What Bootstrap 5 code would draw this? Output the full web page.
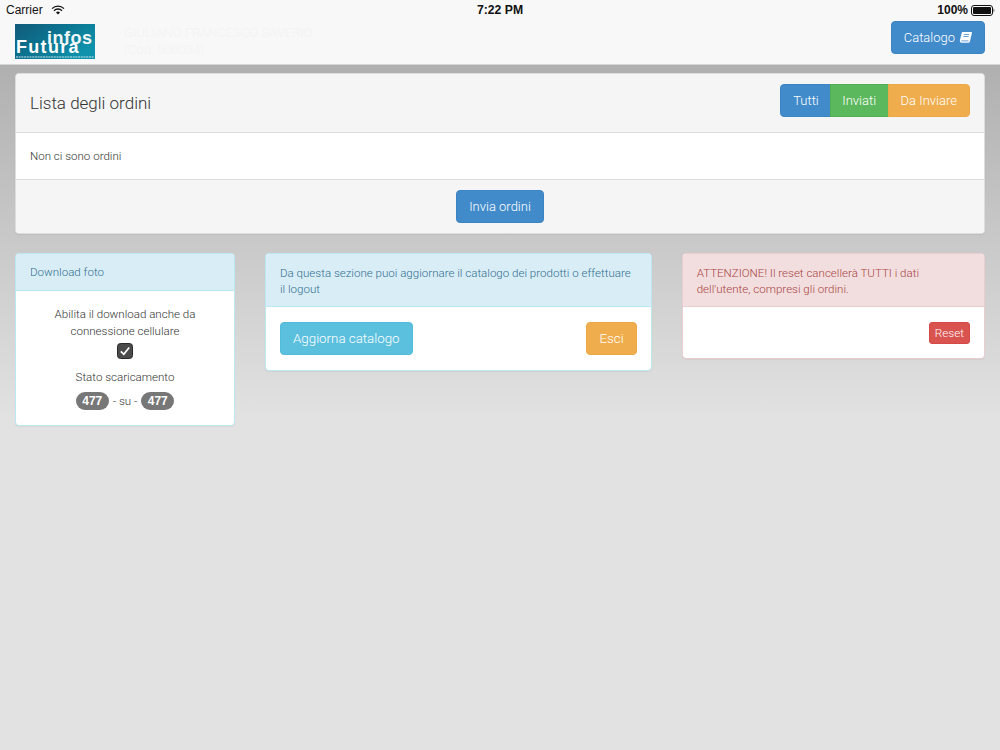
<!DOCTYPE html>
<html lang="it"><head><meta charset="utf-8"><title>Ordini</title>
<link href="https://cdn.jsdelivr.net/npm/bootstrap@5.3.0/dist/css/bootstrap.min.css" rel="stylesheet">
<style>
html,body{height:100%}
body{font-family:Roboto,"Liberation Sans",sans-serif;font-weight:300;font-size:11.55px;line-height:16.67px;color:#333;background:linear-gradient(#b0b0b0 65px,#e2e2e2 420px);background-attachment:fixed;overflow:hidden}
.stat{height:20px;background:#f8f8f8;font-family:"Liberation Sans",sans-serif;font-size:12px;font-weight:400;color:#111;padding:0 5px 0 6px;line-height:20px;position:relative}
.stat b{font-weight:700}
.stat-time{position:absolute;left:0;right:0;top:0;text-align:center;font-weight:700;font-size:12.2px;}
.topbar{height:45px;background:#f8f8f8;border-bottom:1px solid #d8d8d8;padding:4px 15px 0}
.who{color:#f3f3f3;font-size:13px;line-height:17px;margin:0 0 0 29px}
.bb{font-size:13.33px;line-height:19px;padding:6px 12px;border-radius:4px;font-weight:300;border:1px solid;color:#fff}
.bb-tight{font-size:13px}
.bb-blue{background:#428bca;border-color:#3c84c3}
.bb-green{background:#5cb85c;border-color:#52b052}
.bb-orange{background:#f0ad4e;border-color:#eea745}
.bb-cyan{background:#5bc0de;border-color:#50bbda}
.bb-red{background:#d9534f;border-color:#d54a46;font-size:11.67px;line-height:18px;padding:1px 5px;border-radius:3px}
.bb:hover{color:#fff}
.wrap{padding:8px 15px 0}
.pan{border-radius:4px;background:#fff;box-shadow:0 1px 1px rgba(0,0,0,.05);border:1px solid #ddd}
.pan-h{padding:11px 14px 8px;background:#f5f5f5;border-bottom:1px solid #ddd;border-radius:3px 3px 0 0}
.pan-h-top{height:59px;padding-top:10px}
.pan-h-foto{padding:10px 14px}
.pan-title{font-size:17px;font-weight:300;line-height:20px;margin:9px 0 0;color:#333}
.pan-b{padding:15px 14px}
.pan-b-msg{padding-bottom:14px}
.pan-b-end{padding-bottom:14px}
.pan-f{padding:10px 14px;background:#f5f5f5;border-top:1px solid #ddd;border-radius:0 0 3px 3px}
.cols{--bs-gutter-x:30px;margin-top:19px}
.pan-info{border-color:#bce8f1}
.pan-info .pan-h{background:#d9edf7;border-color:#bce8f1;color:#31708f}
.pan-danger{border-color:#ebccd1}
.pan-danger .pan-h{background:#f2dede;border-color:#ebccd1;color:#a94442}
.pill{display:inline-block;background:#777;color:#fff;font-family:"Liberation Sans",sans-serif;font-weight:700;font-size:12px;line-height:12px;padding:3px 6.5px;border-radius:10px}
.pills{gap:4px}
.chk{display:block;margin:3px auto 0;width:16px;height:16px}
.stato{margin:10px 0 7px}
.btn-group .bb{border-radius:0}
.btn-group .bb:first-child{border-radius:4px 0 0 4px;padding:6px 11px 6px 12px}
.btn-group .bb:nth-child(2){padding:6px 11.5px}
.btn-group .bb:last-child{border-radius:0 4px 4px 0}
.cat{margin-top:-3px;gap:4px}
</style></head><body>
<div class="stat d-flex justify-content-between align-items-center">
<span class="d-flex align-items-center gap-2">Carrier
<svg width="14" height="10" viewBox="0 0 14 10"><path d="M1 3.600a8.500 8.500 0 0 1 12 0M3 5.700a5.600 5.600 0 0 1 8 0" fill="none" stroke="#111" stroke-width="1.300"/><path d="M5 7.500a3 3 0 0 1 4 0L7 9.500z" fill="#111"/></svg></span>
<span class="stat-time">7:22 PM</span>
<span class="d-flex align-items-center" style="gap:3px"><b>100%</b>
<svg width="24" height="11" viewBox="0 0 24 11"><rect x=".5" y=".5" width="21" height="10" rx="2.500" fill="none" stroke="#111"/><rect x="2" y="2" width="18" height="7" rx="1" fill="#111"/><path d="M22.600 3.600c.9.2.9 3.600 0 3.800z" fill="#111"/></svg></span>
</div>
<nav class="topbar d-flex justify-content-between align-items-start">
<div class="d-flex align-items-start">
<svg width="80" height="35" viewBox="0 0 80 35"><defs><linearGradient id="lg" x1="0" y1="0" x2="1" y2=".6"><stop offset="0" stop-color="#115a7a"/><stop offset=".55" stop-color="#0b7792"/><stop offset="1" stop-color="#0f93ad"/></linearGradient></defs><rect width="80" height="35" fill="url(#lg)"/><text x="32" y="20" font-family="Liberation Sans" font-weight="700" font-size="18" fill="#eef6f8" letter-spacing=".5">infos</text><text x="1" y="29" font-family="Liberation Sans" font-weight="700" font-size="18" fill="#fff" letter-spacing="1.300">Futura</text><path d="M1 33h78" stroke="#cfe3e9" stroke-width="1.200" stroke-dasharray="2 .7"/></svg>
<p class="who">GIULIANO FRANCESCO SAVERIO<br>(Cod: 000034)</p>
</div>
<a class="btn bb bb-tight bb-blue d-flex align-items-center cat" href="#">Catalogo
<svg width="13" height="13" viewBox="0 0 13 13"><path d="M3.700 1H12.300c.5 0 .7.400.6.900L11 10.300c-.2.800-.7 1.400-1.500 1.400H2.500C1.300 11.700.6 10.700.9 9.500L2.700 2c.1-.6.500-1 1-1z" fill="#fff"/><path d="M4.800 3.500h5.500M4.200 5.500h5.500M2.200 9.900h7.400" stroke="#428bca" stroke-width=".8" fill="none"/></svg></a>
</nav>
<main class="wrap">
<section class="pan">
<div class="pan-h pan-h-top d-flex justify-content-between align-items-start"><h1 class="pan-title">Lista degli ordini</h1>
<div class="btn-group"><a class="btn bb bb-tight bb-blue" href="#">Tutti</a><a class="btn bb bb-tight bb-green" href="#">Inviati</a><a class="btn bb bb-tight bb-orange" href="#">Da Inviare</a></div></div>
<div class="pan-b pan-b-msg">Non ci sono ordini</div>
<div class="pan-f text-center"><a class="btn bb bb-tight bb-blue" href="#">Invia ordini</a></div>
</section>
<div class="row cols">
<div class="col-3"><section class="pan pan-info">
<div class="pan-h pan-h-foto">Download foto</div>
<div class="pan-b text-center"><div>Abilita il download anche da connessione cellulare</div>
<svg class="chk" viewBox="0 0 16 16"><rect x=".5" y=".5" width="15" height="15" rx="3" fill="#4a4a4a" stroke="#2a2a2a"/><path d="M3.800 8.300l3 3 5.400-6.800" fill="none" stroke="#fff" stroke-width="1.700"/></svg>
<div class="stato">Stato scaricamento</div>
<div class="d-flex justify-content-center align-items-center pills"><span class="pill">477</span> - su - <span class="pill">477</span></div></div>
</section></div>
<div class="col-5"><section class="pan pan-info">
<div class="pan-h">Da questa sezione puoi aggiornare il catalogo dei prodotti o effettuare il logout</div>
<div class="pan-b d-flex justify-content-between"><a class="btn bb bb-cyan" href="#">Aggiorna catalogo</a><a class="btn bb bb-orange" href="#">Esci</a></div>
</section></div>
<div class="col-4"><section class="pan pan-danger">
<div class="pan-h">ATTENZIONE! Il reset cancellerà TUTTI i dati dell'utente, compresi gli ordini.</div>
<div class="pan-b pan-b-end d-flex justify-content-end"><a class="btn bb bb-red" href="#">Reset</a></div>
</section></div>
</div>
</main>
</body></html>
